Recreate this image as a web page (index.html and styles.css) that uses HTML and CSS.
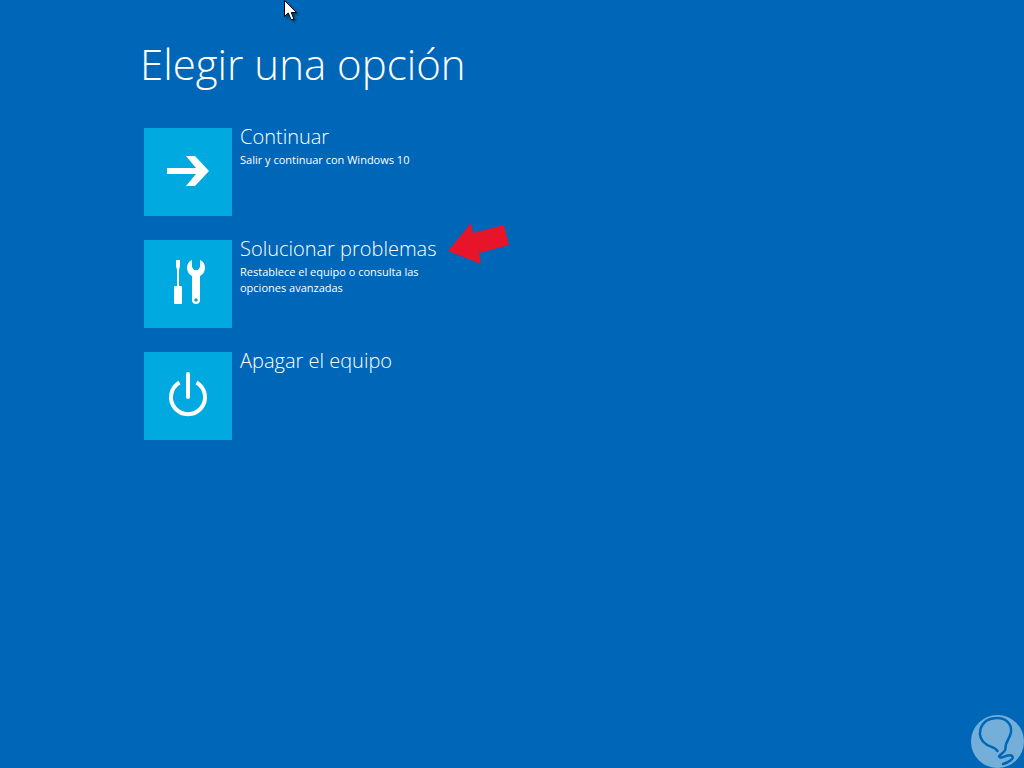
FILE: index.html
```html
<!DOCTYPE html>
<html lang="es">
<head>
<meta charset="utf-8">
<title>Elegir una opción</title>
<link rel="stylesheet" href="styles.css">
</head>
<body>
<main class="screen">
  <h1 class="title">Elegir una opción</h1>
  <div class="options">
    <button class="option" type="button">
      <span class="tile">
        <svg class="icon" viewBox="0 0 88 88" aria-hidden="true"><path fill="#fff" d="M23 40H52L42 28H51L65 43L51 58H42L52 46H23Z"/></svg>
      </span>
      <span class="copy">
        <span class="name">Continuar</span>
        <span class="detail">Salir y continuar con Windows 10</span>
      </span>
    </button>
    <button class="option" type="button">
      <span class="tile">
        <svg class="icon" viewBox="0 0 88 88" aria-hidden="true">
          <path fill="#fff" d="M32 20H36V26L35 30V46H37Q38 46 38 47V63Q38 64 37 64H31Q30 64 30 63V47Q30 46 31 46H33V30L32 26Z"/>
          <path fill="#fff" fill-rule="evenodd" d="M48 20V27L50 30H54L56 27V20Q61 22 61 28Q61 33 56 36V60Q56 64 52 64Q48 64 48 60V36Q43 33 43 28Q43 22 48 20ZM52 58.200A1.800 1.800 0 1 0 52 61.800A1.800 1.800 0 1 0 52 58.200Z"/>
        </svg>
      </span>
      <span class="copy">
        <span class="name">Solucionar problemas</span>
        <span class="detail">Restablece el equipo o consulta las opciones avanzadas</span>
      </span>
    </button>
    <button class="option" type="button">
      <span class="tile">
        <svg class="icon" viewBox="0 0 88 88" aria-hidden="true"><path fill="none" stroke="#fff" stroke-width="4" d="M35.500 30.500A17 17 0 1 0 52.500 30.500"/><path fill="none" stroke="#fff" stroke-width="4" stroke-linecap="round" d="M44 22V45"/></svg>
      </span>
      <span class="copy">
        <span class="name">Apagar el equipo</span>
      </span>
    </button>
  </div>
</main>
<svg class="pointer-arrow" viewBox="0 0 62 42" aria-hidden="true"><path fill="#e81429" d="M0 28L23 0L25 10L56 2L61 22L31 30L33 41Z"/></svg>
<svg class="cursor" viewBox="0 0 16 24" aria-hidden="true"><path fill="#fff" stroke="#000" d="M.5 .5V16.500L4.200 13L7 19.500H10L7.300 12.500H12.500Z"/></svg>
<svg class="badge" viewBox="0 0 54 54" aria-hidden="true">
  <circle cx="27.500" cy="27.500" r="26.500" fill="#74afd9"/>
  <path fill="none" stroke="#0067b8" stroke-width="2.500" stroke-linecap="round" stroke-linejoin="round" d="M27.500 37C25 33 20 33 16.500 30.500C11 27 9 21 10.500 15C13 7 19 4 27 4C35 4 42 9 41 18C40 25 35 28 35.500 34C36 38 30 40 29 42.500C30 46 37 40 41.500 41.500C46 44 38 49 33 50"/>
</svg>
</body>
</html>
```
FILE: styles.css
```css
* { box-sizing: border-box; }
body {
  margin: 0;
  min-height: 100vh;
  background: #0067b8;
  color: #fff;
  font-family: "Open Sans", "Noto Sans", sans-serif;
}
.screen { padding: 36px 24px 24px 140px; }
.title {
  margin: 0;
  font-size: 42px;
  font-weight: 300;
  line-height: 56px;
}
.options {
  display: flex;
  flex-direction: column;
  align-items: flex-start;
  gap: 24px;
  padding: 36px 0 0 4px;
}
.option {
  display: flex;
  gap: 8px;
  padding: 0;
  border: 0;
  background: none;
  color: inherit;
  font-family: inherit;
  text-align: left;
}
.tile {
  flex: none;
  width: 88px;
  height: 88px;
  background: #00a9e0;
}
.icon { display: block; width: 100%; height: 100%; }
.copy { display: flex; flex-direction: column; max-width: 200px; }
.name {
  font-size: 20px;
  font-weight: 300;
  line-height: 18px;
  padding-bottom: 6px;
  white-space: nowrap;
}
.detail { font-size: 11px; line-height: 16px; }
.pointer-arrow { position: absolute; left: 448px; top: 223px; width: 62px; height: 42px; }
.cursor {
  position: absolute;
  left: 284px;
  top: 0;
  width: 16px;
  height: 24px;
  overflow: visible;
  filter: drop-shadow(2px 2px 1px rgba(0, 0, 0, .4));
}
.badge { position: fixed; right: 0; bottom: 0; width: 54px; height: 54px; }
```
